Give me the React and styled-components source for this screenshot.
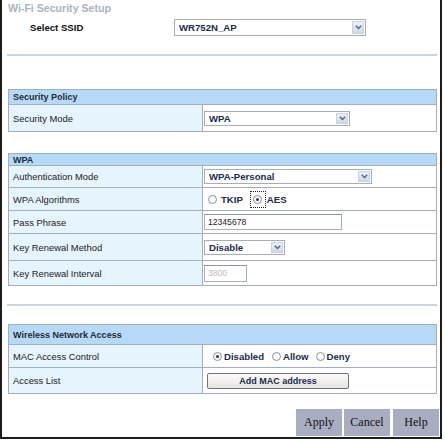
import React from "react";
import styled, { createGlobalStyle } from "styled-components";

const Global = createGlobalStyle`
  html, body { margin: 0; padding: 0; background: #fff; }
  body { font-family: "Liberation Sans", Arial, sans-serif; }
`;

const Frame = styled.div`
  box-sizing: border-box;
  width: 442px;
  height: 439px;
  border: 2px solid #1c1c1c;
  border-top: none;
  display: flex;
  flex-direction: column;
  padding-left: 5px;
`;

const Title = styled.div`
  margin-left: 1px;
  padding-top: 0px;
  height: 16px;
  font-size: 10.6px;
  font-weight: bold;
  color: #a9b3bf;
  line-height: 16px;
`;

const SsidRow = styled.div`
  display: flex;
  align-items: center;
  margin-top: 3px;
  height: 17px;
`;

const SsidLabel = styled.div`
  width: 144px;
  padding-left: 23px;
  font-size: 9.6px;
  font-weight: bold;
  color: #111;
`;

const Divider = styled.div`
  width: 430px;
  height: 2px;
  background: #ccd6de;
  margin-top: ${(p) => p.$top}px;
`;

const Table = styled.table`
  width: 429px;
  border-collapse: collapse;
  border: 1px solid #96a0aa;
  margin-top: ${(p) => p.$top}px;
  margin-left: 1px;
  table-layout: fixed;
`;

const LabelCol = styled.col`
  width: 194px;
`;

const ValueCol = styled.col``;

const HeadCell = styled.td`
  background: #b7d9f8;
  height: ${(p) => p.$h}px;
  padding: 0 0 0 4px;
  font-size: 9px;
  font-weight: bold;
  color: #1e2a3a;
  border: 1px solid #a4aeb8;
  box-sizing: border-box;
`;

const LabelCell = styled.td`
  background: #e6f4fd;
  height: ${(p) => p.$h}px;
  padding: 0 0 0 4px;
  font-size: 9.4px;
  color: #1a1a1a;
  border: 1px solid #a4aeb8;
  box-sizing: border-box;
`;

const ValueCell = styled.td`
  background: #fff;
  padding: 0 0 0 1px;
  border: 1px solid #a4aeb8;
  box-sizing: border-box;
`;

const SelectBox = styled.div`
  box-sizing: border-box;
  width: ${(p) => p.$w}px;
  height: ${(p) => p.$h || 15}px;
  border: 1px solid #a6adb4;
  background: #fff;
  display: flex;
  align-items: center;
  justify-content: space-between;
  padding: 0 1px 0 4px;
  font-size: 9.6px;
  font-weight: bold;
  color: #1b2b4b;
`;

const ArrowBox = styled.span`
  box-sizing: border-box;
  width: 12px;
  height: calc(100% - 2px);
  display: flex;
  align-items: center;
  justify-content: center;
  background: linear-gradient(#eef3fa, #cdd8e6);
  border: 1px solid #c9d3df;
`;

const TextInput = styled.div`
  box-sizing: border-box;
  width: ${(p) => p.$w}px;
  height: ${(p) => p.$h}px;
  border: 1px solid #a9b0b6;
  border-top-color: #8c949c;
  padding-left: 3px;
  display: flex;
  align-items: center;
  font-size: 8.6px;
  color: ${(p) => (p.$disabled ? "#b8bcc0" : "#222")};
`;

const RadioGroup = styled.div`
  display: flex;
  align-items: center;
  padding-left: ${(p) => p.$pad}px;
`;

const RadioItem = styled.span`
  display: inline-flex;
  align-items: center;
  margin-right: ${(p) => p.$gap}px;
  font-size: 9.6px;
  font-weight: bold;
  color: #1b2b4b;
`;

const Focus = styled.span`
  box-sizing: border-box;
  display: inline-flex;
  align-items: center;
  justify-content: center;
  width: 16px;
  height: 17px;
  border: 1px dotted #222;
  margin-right: 1px;
`;

const Circle = styled.span`
  box-sizing: border-box;
  width: 9px;
  height: 9px;
  border-radius: 50%;
  border: 1px solid #8b939b;
  background: radial-gradient(circle, #fff 40%, #e9edf1 100%);
  display: inline-flex;
  align-items: center;
  justify-content: center;
  margin-right: ${(p) => p.$mr}px;
  &::after {
    content: "";
    width: 3px;
    height: 3px;
    border-radius: 50%;
    background: ${(p) => (p.$on ? "#334" : "transparent")};
  }
`;

const MacButton = styled.div`
  box-sizing: border-box;
  width: 142px;
  height: 16px;
  margin-left: 3px;
  border: 1px solid #6f737a;
  border-radius: 2px;
  background: linear-gradient(#fbfbfa, #e6e5e0);
  display: flex;
  align-items: center;
  justify-content: center;
  font-size: 9px;
  font-weight: bold;
  color: #1b2b4b;
`;

const ButtonBar = styled.div`
  display: flex;
  justify-content: flex-end;
  gap: 2px;
  margin-top: auto;
  margin-bottom: 1px;
  margin-right: 1px;
`;

const ActionButton = styled.div`
  width: 46px;
  height: 27px;
  background: #a9adc1;
  display: flex;
  align-items: center;
  justify-content: center;
  font-family: "Liberation Serif", "Times New Roman", serif;
  font-size: 12px;
  color: #111;
  margin-left: ${(p) => p.$ml || 0}px;
`;

const Chevron = () => (
  <svg width="7" height="5" viewBox="0 0 7 5">
    <path d="M0.8 0.8 L3.5 3.6 L6.2 0.8" fill="none" stroke="#55647e" strokeWidth="1.4" />
  </svg>
);

const Select = ({ w, h, children }) => (
  <SelectBox $w={w} $h={h}>
    <span>{children}</span>
    <ArrowBox>
      <Chevron />
    </ArrowBox>
  </SelectBox>
);

const Cols = () => (
  <colgroup>
    <LabelCol />
    <ValueCol />
  </colgroup>
);

export default function App() {
  return (
    <>
      <Global />
      <Frame>
        <Title>Wi-Fi Security Setup</Title>
        <SsidRow>
          <SsidLabel>Select SSID</SsidLabel>
          <Select w={192} h={17}>WR752N_AP</Select>
        </SsidRow>
        <Divider $top={18} />

        <Table $top={33}>
          <Cols />
          <tbody>
            <tr>
              <HeadCell colSpan={2} $h={15}>Security Policy</HeadCell>
            </tr>
            <tr>
              <LabelCell $h={27}>Security Mode</LabelCell>
              <ValueCell>
                <Select w={146}>WPA</Select>
              </ValueCell>
            </tr>
          </tbody>
        </Table>

        <Table $top={21}>
          <Cols />
          <tbody>
            <tr>
              <HeadCell colSpan={2} $h={12}>WPA</HeadCell>
            </tr>
            <tr>
              <LabelCell $h={22}>Authentication Mode</LabelCell>
              <ValueCell>
                <Select w={168}>WPA-Personal</Select>
              </ValueCell>
            </tr>
            <tr>
              <LabelCell $h={23}>WPA Algorithms</LabelCell>
              <ValueCell>
                <RadioGroup $pad={4}>
                  <RadioItem $gap={7}>
                    <Circle $mr={4} />
                    TKIP
                  </RadioItem>
                  <RadioItem $gap={0}>
                    <Focus>
                      <Circle $on $mr={0} />
                    </Focus>
                    AES
                  </RadioItem>
                </RadioGroup>
              </ValueCell>
            </tr>
            <tr>
              <LabelCell $h={23}>Pass Phrase</LabelCell>
              <ValueCell>
                <TextInput $w={138} $h={16}>12345678</TextInput>
              </ValueCell>
            </tr>
            <tr>
              <LabelCell $h={27}>Key Renewal Method</LabelCell>
              <ValueCell>
                <Select w={81}>Disable</Select>
              </ValueCell>
            </tr>
            <tr>
              <LabelCell $h={25}>Key Renewal Interval</LabelCell>
              <ValueCell>
                <TextInput $w={43} $h={17} $disabled>3800</TextInput>
              </ValueCell>
            </tr>
          </tbody>
        </Table>

        <Divider $top={18} />

        <Table $top={18}>
          <Cols />
          <tbody>
            <tr>
              <HeadCell colSpan={2} $h={20}>Wireless Network Access</HeadCell>
            </tr>
            <tr>
              <LabelCell $h={23}>MAC Access Control</LabelCell>
              <ValueCell>
                <RadioGroup $pad={9}>
                  <RadioItem $gap={8}>
                    <Circle $on $mr={2} />
                    Disabled
                  </RadioItem>
                  <RadioItem $gap={7}>
                    <Circle $mr={2} />
                    Allow
                  </RadioItem>
                  <RadioItem $gap={0}>
                    <Circle $mr={2} />
                    Deny
                  </RadioItem>
                </RadioGroup>
              </ValueCell>
            </tr>
            <tr>
              <LabelCell $h={26}>Access List</LabelCell>
              <ValueCell>
                <MacButton>Add MAC address</MacButton>
              </ValueCell>
            </tr>
          </tbody>
        </Table>

        <ButtonBar>
          <ActionButton>Apply</ActionButton>
          <ActionButton>Cancel</ActionButton>
          <ActionButton $ml={1}>Help</ActionButton>
        </ButtonBar>
      </Frame>
    </>
  );
}
